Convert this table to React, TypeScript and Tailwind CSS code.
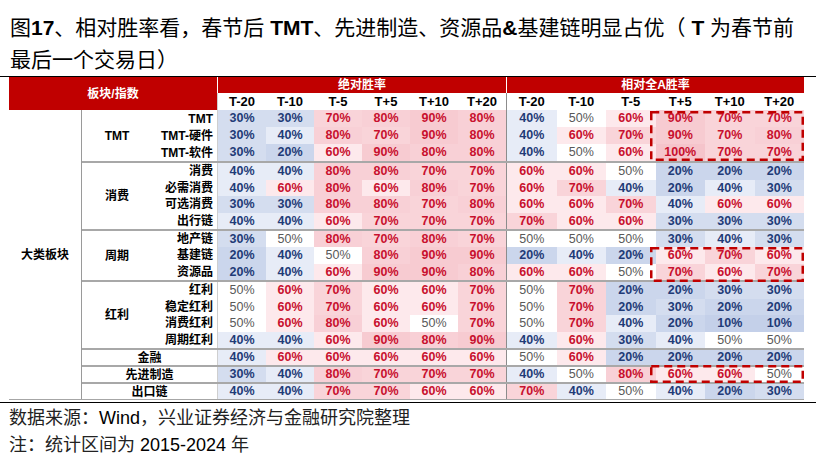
import React from 'react'

type Row = { label: string; abs: number[]; rel: number[] }
type Group = { name: string; single?: boolean; rows: Row[] }

const groups: Group[] = [
  {
    name: 'TMT',
    rows: [
      { label: 'TMT', abs: [30, 30, 70, 80, 90, 80], rel: [40, 50, 60, 90, 70, 70] },
      { label: 'TMT-硬件', abs: [30, 40, 80, 70, 90, 80], rel: [40, 60, 70, 90, 70, 80] },
      { label: 'TMT-软件', abs: [30, 20, 60, 90, 80, 80], rel: [40, 50, 60, 100, 70, 70] },
    ],
  },
  {
    name: '消费',
    rows: [
      { label: '消费', abs: [40, 40, 80, 80, 70, 70], rel: [60, 60, 50, 20, 20, 20] },
      { label: '必需消费', abs: [40, 60, 80, 60, 80, 70], rel: [60, 70, 40, 20, 40, 30] },
      { label: '可选消费', abs: [30, 30, 80, 80, 70, 80], rel: [60, 60, 70, 40, 60, 60] },
      { label: '出行链', abs: [40, 40, 60, 70, 70, 70], rel: [70, 60, 60, 30, 30, 30] },
    ],
  },
  {
    name: '周期',
    rows: [
      { label: '地产链', abs: [30, 50, 80, 70, 80, 70], rel: [50, 50, 50, 30, 40, 30] },
      { label: '基建链', abs: [20, 40, 50, 80, 90, 90], rel: [20, 40, 20, 60, 70, 60] },
      { label: '资源品', abs: [20, 40, 60, 90, 90, 80], rel: [60, 60, 50, 70, 60, 70] },
    ],
  },
  {
    name: '红利',
    rows: [
      { label: '红利', abs: [50, 60, 70, 60, 60, 70], rel: [50, 70, 20, 20, 30, 30] },
      { label: '稳定红利', abs: [50, 60, 70, 60, 60, 70], rel: [50, 70, 20, 30, 20, 20] },
      { label: '消费红利', abs: [50, 60, 80, 60, 50, 70], rel: [50, 70, 40, 20, 10, 10] },
      { label: '周期红利', abs: [40, 40, 60, 90, 80, 90], rel: [40, 60, 30, 40, 50, 50] },
    ],
  },
  { name: '金融', single: true, rows: [{ label: '金融', abs: [40, 60, 60, 60, 60, 60], rel: [50, 60, 20, 20, 20, 20] }] },
  { name: '先进制造', single: true, rows: [{ label: '先进制造', abs: [30, 40, 80, 70, 70, 70], rel: [40, 50, 80, 60, 60, 50] }] },
  { name: '出口链', single: true, rows: [{ label: '出口链', abs: [40, 40, 70, 70, 60, 60], rel: [70, 40, 50, 40, 20, 30] }] },
]

const heights: Record<number, string> = { 1: 'h-[17px]', 3: 'h-[51px]', 4: 'h-[68px]' }

const cellBg: Record<number, string> = {
  10: 'bg-[#c4d0e9]',
  20: 'bg-[#cbd6ec]',
  30: 'bg-[#d4ddef]',
  40: 'bg-[#e7ecf7]',
  50: 'bg-white',
  60: 'bg-[#fde9ec]',
  70: 'bg-[#f9d4d9]',
  80: 'bg-[#f8d0d6]',
  90: 'bg-[#f7cbd1]',
  100: 'bg-[#f5c4cb]',
}

const cols = ['T-20', 'T-10', 'T-5', 'T+5', 'T+10', 'T+20']

const Cell = ({ v }: { v: number }) => {
  const tone =
    v < 50 ? 'text-[#1f3b77] font-bold' : v > 50 ? 'text-[#c8102e] font-bold' : 'text-[#595959] font-normal'
  return (
    <div
      className={`flex items-center justify-center leading-none text-[12.5px] font-['Liberation_Sans',sans-serif] ${cellBg[v]} ${tone}`}
    >
      {v}%
    </div>
  )
}

const DataCells = ({ row }: { row: Row }) => (
  <>
    <div className="w-[289px] grid grid-cols-6 border-l border-[#cfcfcf]">
      {row.abs.map((v, i) => (
        <Cell key={i} v={v} />
      ))}
    </div>
    <div className="w-[298px] grid grid-cols-6 border-l border-[#8c8c8c]">
      {row.rel.map((v, i) => (
        <Cell key={i} v={v} />
      ))}
    </div>
  </>
)

const DashBox = ({ left, top, w, h }: { left: number; top: number; w: number; h: number }) => (
  <svg className="absolute pointer-events-none" style={{ left, top }} width={w} height={h}>
    <rect
      x={1.25}
      y={1.25}
      width={w - 2.5}
      height={h - 2.5}
      fill="none"
      stroke="#c00000"
      strokeWidth={2.5}
      strokeDasharray="8 5"
    />
  </svg>
)

export default function App() {
  return (
    <div className="w-[825px] h-[456px] bg-white overflow-hidden font-['Liberation_Sans','Noto_Sans_CJK_SC',sans-serif] text-black">
      {/* title */}
      <div className="w-[816px] pt-[12px] pl-[10px] text-[21px] leading-[32px] whitespace-nowrap border-b border-black">
        图<b>17</b>、相对胜率看，春节后 <b>TMT</b>、先进制造、资源品<b>&amp;</b>基建链明显占优（ <b>T</b> 为春节前
        <br />
        最后一个交易日）
      </div>

      {/* table */}
      <div className="ml-[9px] w-[795px] leading-none">
        <div className="flex h-[33px]">
          <div className="w-[208px] bg-[#c00000] text-white font-bold text-[12px] flex items-center justify-center">
            板块/指数
          </div>
          <div className="w-[289px] flex flex-col">
            <div className="h-[16px] bg-[#c00000] border-l border-white text-white font-bold text-[12px] flex items-center justify-center">
              绝对胜率
            </div>
            <div className="flex-1 grid grid-cols-6 border-l border-[#cfcfcf]">
              {cols.map((c) => (
                <div key={c} className="flex items-center justify-center font-bold text-[13px]">
                  {c}
                </div>
              ))}
            </div>
          </div>
          <div className="w-[298px] flex flex-col">
            <div className="h-[16px] bg-[#c00000] border-l border-white text-white font-bold text-[12px] flex items-center justify-center">
              相对全A胜率
            </div>
            <div className="flex-1 grid grid-cols-6 border-l border-[#8c8c8c]">
              {cols.map((c) => (
                <div key={c} className="flex items-center justify-center font-bold text-[13px]">
                  {c}
                </div>
              ))}
            </div>
          </div>
        </div>

        <div className="relative flex border-b border-[#a6a6a6]">
          <div className="w-[73px] border-r border-[#9a9a9a] flex items-center justify-center font-bold text-[12px]">
            大类板块
          </div>
          <div className="flex-1 flex flex-col">
            {groups.map((g, gi) => (
              <div
                key={g.name}
                className={`flex ${heights[g.rows.length]} ${gi > 0 ? 'border-t-2 border-[#a8a8a8]' : ''}`}
              >
                {g.single ? (
                  <>
                    <div className="w-[135px] flex items-center justify-center font-bold text-[12px]">{g.name}</div>
                    <DataCells row={g.rows[0]} />
                  </>
                ) : (
                  <>
                    <div className="w-[70px] flex items-center justify-center font-bold text-[12px]">{g.name}</div>
                    <div className="flex-1 flex flex-col">
                      {g.rows.map((r) => (
                        <div key={r.label} className="flex-1 flex">
                          <div className="w-[65px] flex items-center justify-end pr-[4px] font-bold text-[12px] whitespace-nowrap">
                            {r.label}
                          </div>
                          <DataCells row={r} />
                        </div>
                      ))}
                    </div>
                  </>
                )}
              </div>
            ))}
          </div>

          <DashBox left={641} top={1} w={154} h={50} />
          <DashBox left={641} top={137} w={154} h={35} />
          <DashBox left={641} top={255} w={154} h={18} />
        </div>
      </div>

      {/* source */}
      <div className="mt-[2px] w-[816px] border-t border-black pl-[9px] text-[18px] text-[#222]">
        <div className="h-[31px] leading-[31px]">
          数据来源：<span className="text-black">Wind</span>，兴业证券经济与金融研究院整理
        </div>
        <div className="h-[22px] leading-[22px]">
          注：统计区间为 <span className="text-black">2015-2024</span> 年
        </div>
      </div>
    </div>
  )
}
